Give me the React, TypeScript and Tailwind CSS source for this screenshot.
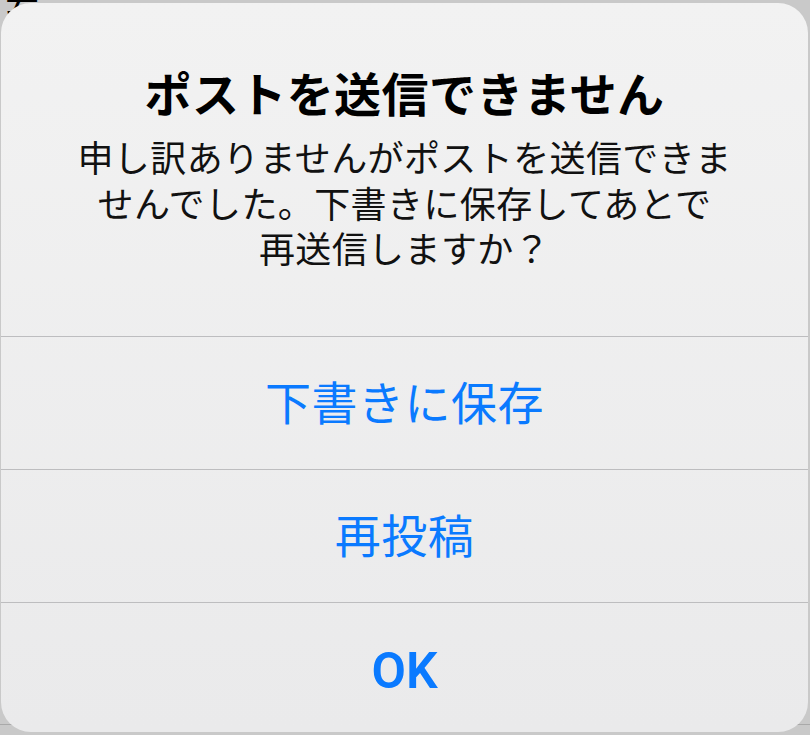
import React from "react";

const jp = { fontFamily: '"Noto Sans CJK JP", "Noto Sans", sans-serif' };

export default function App() {
  return (
    <div className="relative w-[810px] h-[735px] overflow-hidden bg-[#c9c9c9]">
      {/* page content behind the alert */}
      <div
        className="absolute left-[4px] top-[-24px] text-[36px] leading-[40px] text-black"
        style={jp}
      >
        会
      </div>
      <div className="absolute left-0 right-0 top-[724px] h-px bg-[#a9a9a9]" />

      {/* alert */}
      <div className="absolute left-[1px] top-[3px] w-[807px] h-[729px] rounded-[30px] bg-gradient-to-b from-[#f2f2f2] to-[#eaeaeb] overflow-hidden flex flex-col">
        <div className="h-[333px] flex flex-col items-center pt-[61px]" style={jp}>
          <div className="text-[47px] leading-[56px] font-bold text-black tracking-[0.4px]">
            ポストを送信できません
          </div>
          <div className="mt-[14px] text-[36px] leading-[45.5px] tracking-[0.4px] text-[#111] text-center">
            申し訳ありませんがポストを送信できま
            <br />
            せんでした。下書きに保存してあとで
            <br />
            再送信しますか？
          </div>
        </div>
        <div className="h-px bg-[#bdbdbf]" />
        <div
          className="h-[132px] flex items-center justify-center pb-[6px] text-[46px] tracking-[0.5px] text-[#0a7aff]"
          style={jp}
        >
          下書きに保存
        </div>
        <div className="h-px bg-[#bdbdbf]" />
        <div
          className="h-[132px] flex items-center justify-center pb-[6px] text-[46px] tracking-[0.5px] text-[#0a7aff]"
          style={jp}
        >
          再投稿
        </div>
        <div className="h-px bg-[#bdbdbf]" />
        <div
          className="flex-1 flex items-center justify-center pt-[8px] text-[50px] font-semibold text-[#0a7aff]"
          style={{ fontFamily: 'Roboto, "Liberation Sans", sans-serif' }}
        >
          OK
        </div>
      </div>
    </div>
  );
}
